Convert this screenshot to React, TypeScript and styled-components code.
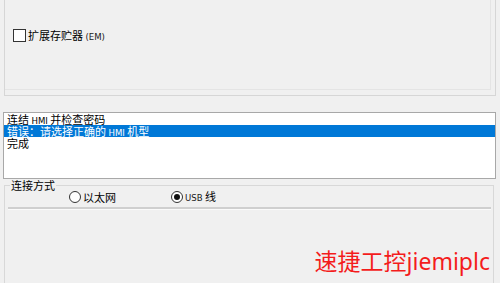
import React from "react";
import styled, { createGlobalStyle } from "styled-components";

const Global = createGlobalStyle`
  html, body {
    margin: 0;
    padding: 0;
    background: #f0f0f0;
    overflow: hidden;
  }
  body {
    font-family: "Noto Sans CJK SC", "Liberation Sans", sans-serif;
    font-size: 11px;
    color: #000;
  }
`;

const Screen = styled.div`
  width: 500px;
  height: 283px;
  overflow: hidden;
  display: flex;
  flex-direction: column;
  & > * {
    flex-shrink: 0;
  }
`;

const Page = styled.div`
  box-sizing: border-box;
  margin-left: 4px;
  width: 492px;
  height: 96px;
  border: 1px solid #d6d6d6;
  border-top: none;
  display: flex;
`;

const Inner = styled.div`
  flex: 1;
  margin: 0 4px 5px 0;
  border-right: 1px solid #e4e4e4;
  border-bottom: 1px solid #e4e4e4;
`;

const CheckRow = styled.label`
  display: flex;
  align-items: center;
  gap: 2px;
  padding: 29px 0 0 8px;
  height: 13px;
  line-height: 13px;
`;

const Box = styled.span`
  box-sizing: border-box;
  width: 13px;
  height: 13px;
  border: 1px solid #333;
  background: #fff;
`;

const Lat = styled.span`
  font-family: "DejaVu Sans", "Liberation Sans", sans-serif;
  font-stretch: condensed;
  font-size: 9.5px;
  color: #1a1a1a;
`;

const ListBox = styled.div`
  box-sizing: border-box;
  margin: 16px 0 0 3px;
  width: 493px;
  height: 67px;
  background: #fff;
  border: 1px solid #a8a8a8;
`;

const Item = styled.div<{ $selected?: boolean }>`
  height: 12px;
  line-height: 12px;
  padding-left: 3px;
  white-space: nowrap;
  background: ${(p) => (p.$selected ? "#0078d7" : "transparent")};
  color: ${(p) => (p.$selected ? "#fff" : "#000")};
  ${Lat} {
    color: inherit;
  }
`;

const Group = styled.fieldset`
  box-sizing: border-box;
  margin: 0 0 0 4px;
  padding: 0;
  width: 490px;
  height: 120px;
  border: 1px solid #d8d8d8;
  min-width: 0;
`;

const Legend = styled.legend`
  margin-left: 5px;
  padding: 0 1px;
  line-height: 12px;
  font-size: 11px;
`;

const RadioRow = styled.div`
  display: flex;
  align-items: center;
  height: 12px;
  padding-left: 64px;
`;

const RadioItem = styled.label<{ $w?: number }>`
  display: flex;
  align-items: center;
  gap: 2px;
  width: ${(p) => (p.$w ? `${p.$w}px` : "auto")};
  line-height: 12px;
`;

const Dot = styled.span<{ $on?: boolean }>`
  box-sizing: border-box;
  width: 12px;
  height: 12px;
  border-radius: 50%;
  border: 1px solid #333;
  background: #fff;
  display: flex;
  align-items: center;
  justify-content: center;
  &::after {
    content: "";
    width: 6px;
    height: 6px;
    border-radius: 50%;
    background: ${(p) => (p.$on ? "#111" : "transparent")};
  }
`;

const Separator = styled.div`
  margin: 4px 2px 0 3px;
  height: 2px;
  background: #cfcfcf;
  border-bottom: 1px solid #fafafa;
`;

const Watermark = styled.div`
  margin-top: 36px;
  padding-right: 3px;
  text-align: right;
  font-family: "Noto Sans", "Noto Sans CJK SC", sans-serif;
  font-size: 23px;
  line-height: 30px;
  color: #f41c1c;
`;

export default function App() {
  return (
    <Screen>
      <Global />
      <Page>
        <Inner>
          <CheckRow>
            <Box />
            <span>
              扩展存贮器 <Lat>(EM)</Lat>
            </span>
          </CheckRow>
        </Inner>
      </Page>

      <ListBox>
        <Item>
          连结 <Lat>HMI</Lat> 并检查密码
        </Item>
        <Item $selected>
          错误：请选择正确的 <Lat>HMI</Lat> 机型
        </Item>
        <Item>完成</Item>
      </ListBox>

      <Group>
        <Legend>连接方式</Legend>
        <RadioRow>
          <RadioItem $w={102}>
            <Dot />
            以太网
          </RadioItem>
          <RadioItem>
            <Dot $on />
            <span>
              <Lat>USB</Lat> 线
            </span>
          </RadioItem>
        </RadioRow>
        <Separator />
        <Watermark>速捷工控jiemiplc</Watermark>
      </Group>
    </Screen>
  );
}
